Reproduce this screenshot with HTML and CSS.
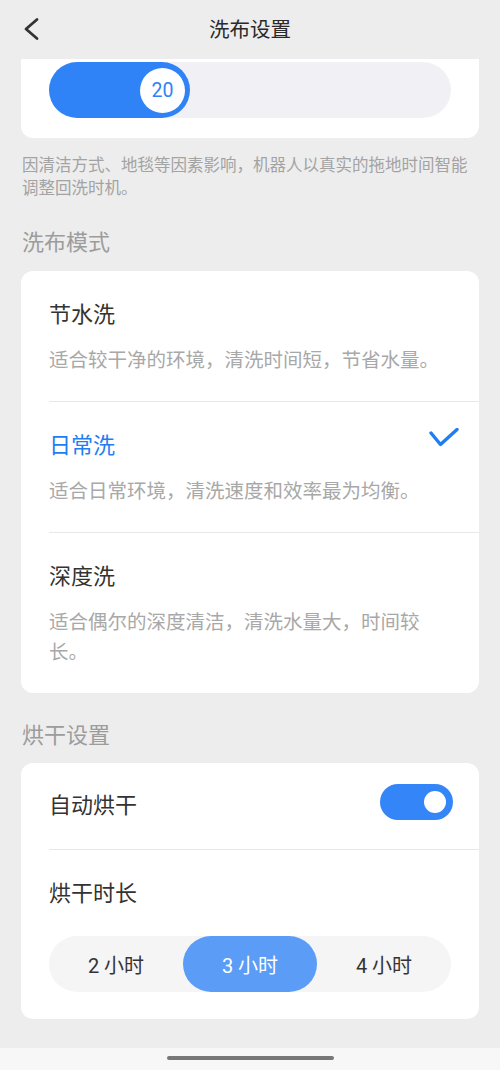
FILE: index.html
```html
<!DOCTYPE html>
<html lang="zh-CN">
<head>
<meta charset="utf-8">
<title>洗布设置</title>
<link rel="stylesheet" href="styles.css">
</head>
<body>
<div class="page">
  <header class="header">
    <svg class="back" width="16" height="24" viewBox="0 0 16 24"><polyline points="13,2.5 2,12 13,21.5" fill="none" stroke="#333" stroke-width="2.8" stroke-linecap="round" stroke-linejoin="round"/></svg>
    <h1 class="title">洗布设置</h1>
  </header>

  <section class="card card-top">
    <div class="slider">
      <div class="slider-fill" style="width:141px">
        <div class="slider-knob">20</div>
      </div>
    </div>
  </section>
  <p class="note">因清洁方式、地毯等因素影响，机器人以真实的拖地时间智能调整回洗时机。</p>

  <h2 class="section-title">洗布模式</h2>
  <section class="card">
    <div class="mode">
      <div class="mode-head"><span class="mode-title">节水洗</span></div>
      <p class="mode-desc">适合较干净的环境，清洗时间短，节省水量。</p>
    </div>
    <div class="mode">
      <div class="mode-head"><span class="mode-title selected">日常洗</span>
        <svg class="check" width="30" height="20" viewBox="0 0 30 20"><polyline points="2,5 11.5,16.5 28,1.5" fill="none" stroke="#1f7ef2" stroke-width="3.4" stroke-linecap="round" stroke-linejoin="round"/></svg>
      </div>
      <p class="mode-desc">适合日常环境，清洗速度和效率最为均衡。</p>
    </div>
    <div class="mode">
      <div class="mode-head"><span class="mode-title">深度洗</span></div>
      <p class="mode-desc">适合偶尔的深度清洁，清洗水量大，时间较长。</p>
    </div>
  </section>

  <h2 class="section-title dry">烘干设置</h2>
  <section class="card">
    <div class="row-switch">
      <span class="row-title">自动烘干</span>
      <div class="toggle"><div class="toggle-knob"></div></div>
    </div>
    <div class="row-duration">
      <span class="row-title">烘干时长</span>
      <div class="segment">
        <span class="seg">2 小时</span>
        <span class="seg active">3 小时</span>
        <span class="seg">4 小时</span>
      </div>
    </div>
  </section>

  <footer class="home-bar"><div class="home-indicator"></div></footer>
</div>
</body>
</html>
```
FILE: styles.css
```css
html, body {
  margin: 0;
  padding: 0;
  background: #ededed;
}
body {
  font-family: Roboto, "Noto Sans CJK SC", sans-serif;
  color: #333;
}
.page {
  width: 500px;
  height: 1070px;
  display: flex;
  flex-direction: column;
  overflow: hidden;
}
.header {
  height: 59px;
  flex: none;
  display: flex;
  align-items: center;
  justify-content: center;
  position: relative;
}
.back {
  position: absolute;
  left: 24px;
  top: 17px;
}
.title {
  margin: 0;
  font-size: 20.5px;
  font-weight: 400;
  line-height: 28px;
  color: #2a2a2a;
  margin-top: 1px;
}
.card {
  background: #fff;
  margin: 0 21px;
  border-radius: 12px;
  flex: none;
}
.card-top {
  border-radius: 0 0 12px 12px;
  padding: 3px 28px 20px;
}
.slider {
  height: 56px;
  border-radius: 28px;
  background: #f1f1f5;
  display: flex;
}
.slider-fill {
  height: 56px;
  border-radius: 28px;
  background: #2f83f6;
  display: flex;
  align-items: center;
  justify-content: flex-end;
  padding-right: 5px;
  box-sizing: border-box;
}
.slider-knob {
  width: 45px;
  height: 45px;
  border-radius: 50%;
  background: #fff;
  color: #2f83f6;
  font-size: 19.5px;
  display: flex;
  align-items: center;
  justify-content: center;
}
.note {
  margin: 16px 22px 0;
  font-size: 16.5px;
  line-height: 23px;
  color: #a3a3a3;
}
.section-title {
  margin: 28px 22px 13px;
  font-size: 22px;
  font-weight: 400;
  line-height: 30px;
  color: #9c9c9c;
}
.section-title.dry {
  margin-top: 28px;
  margin-bottom: 12px;
}
.mode {
  margin-left: 28px;
  padding: 30px 28px 25px 0;
  border-bottom: 1px solid #e8e8e8;
}
.mode:last-child {
  border-bottom: none;
}
.mode-head {
  display: flex;
  justify-content: space-between;
  align-items: flex-start;
}
.mode-title {
  font-size: 22px;
  line-height: 28px;
  color: #333;
}
.mode-title.selected {
  color: #1f7ef2;
}
.check {
  margin-top: -4px;
  margin-right: -8px;
}
.mode-desc {
  margin: 17px 0 0;
  font-size: 19.5px;
  line-height: 30px;
  color: #a8a8a8;
}
.row-title {
  font-size: 22px;
  line-height: 28px;
  color: #333;
}
.row-switch {
  margin-left: 28px;
  padding-right: 26px;
  height: 86px;
  display: flex;
  align-items: center;
  justify-content: space-between;
  border-bottom: 1px solid #e8e8e8;
}
.toggle {
  width: 73px;
  height: 36px;
  border-radius: 18px;
  background: #3385f8;
  display: flex;
  align-items: center;
  justify-content: flex-end;
  padding-right: 7px;
  box-sizing: border-box;
  margin-bottom: 8px;
}
.toggle-knob {
  width: 22px;
  height: 22px;
  border-radius: 50%;
  background: #fff;
}
.row-duration {
  padding: 30px 28px 27px;
  display: flex;
  flex-direction: column;
  gap: 28px;
}
.segment {
  height: 56px;
  border-radius: 28px;
  background: #f5f5f5;
  display: grid;
  grid-template-columns: repeat(3, 1fr);
}
.seg {
  display: flex;
  align-items: center;
  justify-content: center;
  font-size: 20px;
  color: #333;
  border-radius: 28px;
}
.seg.active {
  background: #5b9cf6;
  color: #fff;
}
.home-bar {
  margin-top: auto;
  height: 22px;
  background: #f7f7f7;
  display: flex;
  justify-content: center;
  padding-top: 8px;
  box-sizing: border-box;
}
.home-indicator {
  width: 167px;
  height: 4px;
  border-radius: 2px;
  background: #777;
}
```
